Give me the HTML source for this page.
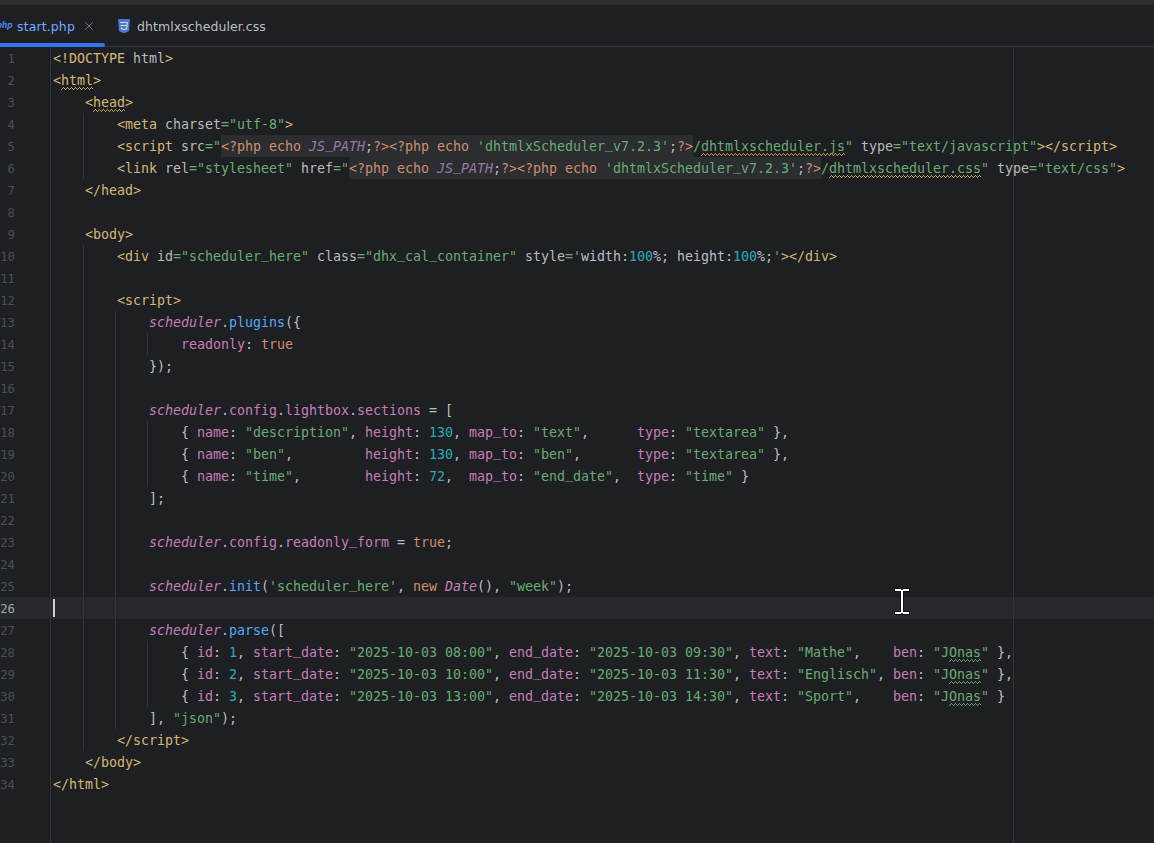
<!DOCTYPE html>
<html lang="en">
<head>
<meta charset="utf-8">
<title>start.php</title>
<style>
html,body{margin:0;padding:0;}
body{width:1154px;height:843px;overflow:hidden;background:#1e1f22;position:relative;font-family:"DejaVu Sans Mono","Liberation Mono",monospace;}
.topstrip{position:absolute;left:0;top:0;width:1154px;height:5px;background:#2b2d30;}
.tabs{position:absolute;left:0;top:5px;width:1154px;height:41px;background:#1e1f22;border-bottom:1px solid #393b40;font-family:"DejaVu Sans","Liberation Sans",sans-serif;font-size:12.5px;}
.tabs .lbl{position:absolute;top:1px;line-height:42px;white-space:pre;}
.underline{position:absolute;left:-4px;top:43px;width:109px;height:4px;border-radius:2px;background:#3574f0;}
.gutterline{position:absolute;left:50px;top:47px;width:1px;height:796px;background:#313438;}
.margin{position:absolute;left:1013px;top:47px;width:1px;height:796px;background:#313438;}
.guide{position:absolute;width:1px;background:#313438;}
.curline{position:absolute;left:0;top:597px;width:1154px;height:22px;background:#26282e;}
.nums{position:absolute;left:0;top:48px;width:14.5px;text-align:right;color:#4b5059;font-size:12.3px;letter-spacing:-0.3px;line-height:22px;white-space:pre;}
.nums .cur{color:#a1a3ab;}
.nums div{height:22px;direction:rtl;}
.code{position:absolute;left:53px;top:48px;color:#bcbec4;font-size:13.3px;letter-spacing:-0.0055px;line-height:22px;white-space:pre;}
.ln{height:22px;}
.phpbg{position:absolute;height:22px;width:472px;background:#2b2d30;}
.t{color:#d5b778}.a{color:#bababa}.s{color:#6aab73}.k{color:#cf8e6d}.c{color:#9876aa;font-style:italic}
.v{color:#c77dbb;font-style:italic}.p{color:#c77dbb}.f{color:#56a8f5}.n{color:#2aacb8}
.u{position:relative;top:-3px;font-style:inherit;}
.sq{position:absolute;overflow:visible;}
.caret{position:absolute;left:53px;top:599px;width:2px;height:18px;background:#ced0d6;}
svg.abs{position:absolute;overflow:visible;}
</style>
</head>
<body>
<div class="topstrip"></div>
<div class="tabs">
  <span class="lbl" style="left:17px;color:#70aeff;letter-spacing:0.12px">start.php</span>
  <span class="lbl" style="left:137px;color:#bcbec4;letter-spacing:0.06px">dhtmlxscheduler.css</span>
</div>
<svg class="abs" style="left:0;top:16px" width="16" height="18" viewBox="0 0 16 18"><text x="-3.3" y="12.3" font-family="Liberation Sans, sans-serif" font-weight="bold" font-style="italic" font-size="8.6" fill="#548af7">php</text></svg>
<svg class="abs" style="left:84px;top:21px" width="10" height="10" viewBox="0 0 10 10"><path d="M1.2 1.2 L8.8 8.8 M8.8 1.2 L1.2 8.8" stroke="#73777e" stroke-width="1" fill="none"/></svg>
<svg class="abs" style="left:117px;top:18px" width="14" height="16" viewBox="0 0 14 16">
  <path d="M1 1 H13 L12 13.2 L7 15.2 L2 13.2 Z" fill="#4877d4"/>
  <path d="M3 4.5 H10.4 L9.6 10.7 L7 11.6 L4.6 10.7 L4.4 9.2 M3.4 7.5 H10" fill="none" stroke="#dadada" stroke-width="1.05" stroke-linejoin="round"/>
</svg>
<div class="underline"></div>
<div class="curline"></div>
<div class="phpbg" style="left:221px;top:135px"></div>
<div class="phpbg" style="left:349px;top:157px"></div>
<div class="gutterline"></div>
<div class="margin"></div>
<div class="guide" style="left:83px;top:113px;height:66px"></div>
<div class="guide" style="left:83px;top:245px;height:506px"></div>
<div class="guide" style="left:115px;top:311px;height:418px"></div>
<div class="guide" style="left:147px;top:333px;height:22px"></div>
<div class="guide" style="left:147px;top:421px;height:66px"></div>
<div class="guide" style="left:147px;top:641px;height:66px"></div>
<div class="nums"><div>1</div><div>2</div><div>3</div><div>4</div><div>5</div><div>6</div><div>7</div><div>8</div><div>9</div><div>10</div><div>11</div><div>12</div><div>13</div><div>14</div><div>15</div><div>16</div><div>17</div><div>18</div><div>19</div><div>20</div><div>21</div><div>22</div><div>23</div><div>24</div><div>25</div><div class="cur">26</div><div>27</div><div>28</div><div>29</div><div>30</div><div>31</div><div>32</div><div>33</div><div>34</div></div>
<div class="code"><div class="ln"><span class="t">&lt;!DOCTYPE</span><span class="a"> html</span><span class="t">&gt;</span></div><div class="ln"><span class="t">&lt;html&gt;</span></div><div class="ln"><span class="t">    &lt;head&gt;</span></div><div class="ln"><span class="t">        &lt;meta</span><span class="a"> charset</span><span class="s">="utf-8"</span><span class="t">&gt;</span></div><div class="ln"><span class="t">        &lt;script</span><span class="a"> src</span><span class="s">="</span><span class="php"><span class="k">&lt;?php echo </span><span class="c">JS<i class="u">_</i>PATH</span>;<span class="k">?&gt;</span><span class="k">&lt;?php echo </span><span class="s">'dhtmlxScheduler<i class="u">_</i>v7.2.3'</span>;<span class="k">?&gt;</span></span><span class="s">/dhtmlxscheduler.js"</span><span class="a"> type</span><span class="s">="text/javascript"</span><span class="t">&gt;&lt;/script&gt;</span></div><div class="ln"><span class="t">        &lt;link</span><span class="a"> rel</span><span class="s">="stylesheet"</span><span class="a"> href</span><span class="s">="</span><span class="php"><span class="k">&lt;?php echo </span><span class="c">JS<i class="u">_</i>PATH</span>;<span class="k">?&gt;</span><span class="k">&lt;?php echo </span><span class="s">'dhtmlxScheduler<i class="u">_</i>v7.2.3'</span>;<span class="k">?&gt;</span></span><span class="s">/dhtmlxscheduler.css"</span><span class="a"> type</span><span class="s">="text/css"</span><span class="t">&gt;</span></div><div class="ln"><span class="t">    &lt;/head&gt;</span></div><div class="ln"></div><div class="ln"><span class="t">    &lt;body&gt;</span></div><div class="ln"><span class="t">        &lt;div</span><span class="a"> id</span><span class="s">="scheduler<i class="u">_</i>here"</span><span class="a"> class</span><span class="s">="dhx<i class="u">_</i>cal<i class="u">_</i>container"</span><span class="a"> style</span><span class="s">='</span>width:<span class="n">100</span>%; height:<span class="n">100</span>%;<span class="s">'</span><span class="t">&gt;&lt;/div&gt;</span></div><div class="ln"></div><div class="ln"><span class="t">        &lt;script&gt;</span></div><div class="ln"><span class="v">            scheduler</span>.<span class="f">plugins</span>({</div><div class="ln"><span class="p">                readonly</span>: <span class="k">true</span></div><div class="ln">            });</div><div class="ln"></div><div class="ln"><span class="v">            scheduler</span>.<span class="p">config</span>.<span class="p">lightbox</span>.<span class="p">sections</span> = [</div><div class="ln">                { <span class="p">name</span>: <span class="s">"description"</span>, <span class="p">height</span>: <span class="n">130</span>, <span class="p">map<i class="u">_</i>to</span>: <span class="s">"text"</span>,      <span class="p">type</span>: <span class="s">"textarea"</span> },</div><div class="ln">                { <span class="p">name</span>: <span class="s">"ben"</span>,         <span class="p">height</span>: <span class="n">130</span>, <span class="p">map<i class="u">_</i>to</span>: <span class="s">"ben"</span>,       <span class="p">type</span>: <span class="s">"textarea"</span> },</div><div class="ln">                { <span class="p">name</span>: <span class="s">"time"</span>,        <span class="p">height</span>: <span class="n">72</span>,  <span class="p">map<i class="u">_</i>to</span>: <span class="s">"end<i class="u">_</i>date"</span>,  <span class="p">type</span>: <span class="s">"time"</span> }</div><div class="ln">            ];</div><div class="ln"></div><div class="ln"><span class="v">            scheduler</span>.<span class="p">config</span>.<span class="p">readonly<i class="u">_</i>form</span> = <span class="k">true</span>;</div><div class="ln"></div><div class="ln"><span class="v">            scheduler</span>.<span class="f">init</span>(<span class="s">'scheduler<i class="u">_</i>here'</span>, <span class="k">new </span><span class="v">Date</span>(), <span class="s">"week"</span>);</div><div class="ln cur"></div><div class="ln"><span class="v">            scheduler</span>.<span class="f">parse</span>([</div><div class="ln">                { <span class="p">id</span>: <span class="n">1</span>, <span class="p">start<i class="u">_</i>date</span>: <span class="s">"2025-10-03 08:00"</span>, <span class="p">end<i class="u">_</i>date</span>: <span class="s">"2025-10-03 09:30"</span>, <span class="p">text</span>: <span class="s">"Mathe"</span>,    <span class="p">ben</span>: <span class="s">"JOnas"</span> },</div><div class="ln">                { <span class="p">id</span>: <span class="n">2</span>, <span class="p">start<i class="u">_</i>date</span>: <span class="s">"2025-10-03 10:00"</span>, <span class="p">end<i class="u">_</i>date</span>: <span class="s">"2025-10-03 11:30"</span>, <span class="p">text</span>: <span class="s">"Englisch"</span>, <span class="p">ben</span>: <span class="s">"JOnas"</span> },</div><div class="ln">                { <span class="p">id</span>: <span class="n">3</span>, <span class="p">start<i class="u">_</i>date</span>: <span class="s">"2025-10-03 13:00"</span>, <span class="p">end<i class="u">_</i>date</span>: <span class="s">"2025-10-03 14:30"</span>, <span class="p">text</span>: <span class="s">"Sport"</span>,    <span class="p">ben</span>: <span class="s">"JOnas"</span> }</div><div class="ln">            ], <span class="s">"json"</span>);</div><div class="ln"><span class="t">        &lt;/script&gt;</span></div><div class="ln"><span class="t">    &lt;/body&gt;</span></div><div class="ln"><span class="t">&lt;/html&gt;</span></div></div>
<svg class="sq" style="left:61px;top:87px" width="32" height="3" viewBox="0 0 32 3" shape-rendering="crispEdges"><path d="M0 2h1v1h-1zM1 1h1v1h-1zM2 0h1v1h-1zM3 1h1v1h-1zM4 2h1v1h-1zM5 1h1v1h-1zM6 0h1v1h-1zM7 1h1v1h-1zM8 2h1v1h-1zM9 1h1v1h-1zM10 0h1v1h-1zM11 1h1v1h-1zM12 2h1v1h-1zM13 1h1v1h-1zM14 0h1v1h-1zM15 1h1v1h-1zM16 2h1v1h-1zM17 1h1v1h-1zM18 0h1v1h-1zM19 1h1v1h-1zM20 2h1v1h-1zM21 1h1v1h-1zM22 0h1v1h-1zM23 1h1v1h-1zM24 2h1v1h-1zM25 1h1v1h-1zM26 0h1v1h-1zM27 1h1v1h-1zM28 2h1v1h-1zM29 1h1v1h-1zM30 0h1v1h-1zM31 1h1v1h-1z" fill="#c4a04a"/></svg>
<svg class="sq" style="left:93px;top:109px" width="32" height="3" viewBox="0 0 32 3" shape-rendering="crispEdges"><path d="M0 2h1v1h-1zM1 1h1v1h-1zM2 0h1v1h-1zM3 1h1v1h-1zM4 2h1v1h-1zM5 1h1v1h-1zM6 0h1v1h-1zM7 1h1v1h-1zM8 2h1v1h-1zM9 1h1v1h-1zM10 0h1v1h-1zM11 1h1v1h-1zM12 2h1v1h-1zM13 1h1v1h-1zM14 0h1v1h-1zM15 1h1v1h-1zM16 2h1v1h-1zM17 1h1v1h-1zM18 0h1v1h-1zM19 1h1v1h-1zM20 2h1v1h-1zM21 1h1v1h-1zM22 0h1v1h-1zM23 1h1v1h-1zM24 2h1v1h-1zM25 1h1v1h-1zM26 0h1v1h-1zM27 1h1v1h-1zM28 2h1v1h-1zM29 1h1v1h-1zM30 0h1v1h-1zM31 1h1v1h-1z" fill="#c4a04a"/></svg>
<svg class="sq" style="left:701px;top:153px" width="144" height="3" viewBox="0 0 144 3" shape-rendering="crispEdges"><path d="M0 2h1v1h-1zM1 1h1v1h-1zM2 0h1v1h-1zM3 1h1v1h-1zM4 2h1v1h-1zM5 1h1v1h-1zM6 0h1v1h-1zM7 1h1v1h-1zM8 2h1v1h-1zM9 1h1v1h-1zM10 0h1v1h-1zM11 1h1v1h-1zM12 2h1v1h-1zM13 1h1v1h-1zM14 0h1v1h-1zM15 1h1v1h-1zM16 2h1v1h-1zM17 1h1v1h-1zM18 0h1v1h-1zM19 1h1v1h-1zM20 2h1v1h-1zM21 1h1v1h-1zM22 0h1v1h-1zM23 1h1v1h-1zM24 2h1v1h-1zM25 1h1v1h-1zM26 0h1v1h-1zM27 1h1v1h-1zM28 2h1v1h-1zM29 1h1v1h-1zM30 0h1v1h-1zM31 1h1v1h-1zM32 2h1v1h-1zM33 1h1v1h-1zM34 0h1v1h-1zM35 1h1v1h-1zM36 2h1v1h-1zM37 1h1v1h-1zM38 0h1v1h-1zM39 1h1v1h-1zM40 2h1v1h-1zM41 1h1v1h-1zM42 0h1v1h-1zM43 1h1v1h-1zM44 2h1v1h-1zM45 1h1v1h-1zM46 0h1v1h-1zM47 1h1v1h-1zM48 2h1v1h-1zM49 1h1v1h-1zM50 0h1v1h-1zM51 1h1v1h-1zM52 2h1v1h-1zM53 1h1v1h-1zM54 0h1v1h-1zM55 1h1v1h-1zM56 2h1v1h-1zM57 1h1v1h-1zM58 0h1v1h-1zM59 1h1v1h-1zM60 2h1v1h-1zM61 1h1v1h-1zM62 0h1v1h-1zM63 1h1v1h-1zM64 2h1v1h-1zM65 1h1v1h-1zM66 0h1v1h-1zM67 1h1v1h-1zM68 2h1v1h-1zM69 1h1v1h-1zM70 0h1v1h-1zM71 1h1v1h-1zM72 2h1v1h-1zM73 1h1v1h-1zM74 0h1v1h-1zM75 1h1v1h-1zM76 2h1v1h-1zM77 1h1v1h-1zM78 0h1v1h-1zM79 1h1v1h-1zM80 2h1v1h-1zM81 1h1v1h-1zM82 0h1v1h-1zM83 1h1v1h-1zM84 2h1v1h-1zM85 1h1v1h-1zM86 0h1v1h-1zM87 1h1v1h-1zM88 2h1v1h-1zM89 1h1v1h-1zM90 0h1v1h-1zM91 1h1v1h-1zM92 2h1v1h-1zM93 1h1v1h-1zM94 0h1v1h-1zM95 1h1v1h-1zM96 2h1v1h-1zM97 1h1v1h-1zM98 0h1v1h-1zM99 1h1v1h-1zM100 2h1v1h-1zM101 1h1v1h-1zM102 0h1v1h-1zM103 1h1v1h-1zM104 2h1v1h-1zM105 1h1v1h-1zM106 0h1v1h-1zM107 1h1v1h-1zM108 2h1v1h-1zM109 1h1v1h-1zM110 0h1v1h-1zM111 1h1v1h-1zM112 2h1v1h-1zM113 1h1v1h-1zM114 0h1v1h-1zM115 1h1v1h-1zM116 2h1v1h-1zM117 1h1v1h-1zM118 0h1v1h-1zM119 1h1v1h-1zM120 2h1v1h-1zM121 1h1v1h-1zM122 0h1v1h-1zM123 1h1v1h-1zM124 2h1v1h-1zM125 1h1v1h-1zM126 0h1v1h-1zM127 1h1v1h-1zM128 2h1v1h-1zM129 1h1v1h-1zM130 0h1v1h-1zM131 1h1v1h-1zM132 2h1v1h-1zM133 1h1v1h-1zM134 0h1v1h-1zM135 1h1v1h-1zM136 2h1v1h-1zM137 1h1v1h-1zM138 0h1v1h-1zM139 1h1v1h-1zM140 2h1v1h-1zM141 1h1v1h-1zM142 0h1v1h-1zM143 1h1v1h-1z" fill="#c4a04a"/></svg>
<svg class="sq" style="left:829px;top:175px" width="152" height="3" viewBox="0 0 152 3" shape-rendering="crispEdges"><path d="M0 2h1v1h-1zM1 1h1v1h-1zM2 0h1v1h-1zM3 1h1v1h-1zM4 2h1v1h-1zM5 1h1v1h-1zM6 0h1v1h-1zM7 1h1v1h-1zM8 2h1v1h-1zM9 1h1v1h-1zM10 0h1v1h-1zM11 1h1v1h-1zM12 2h1v1h-1zM13 1h1v1h-1zM14 0h1v1h-1zM15 1h1v1h-1zM16 2h1v1h-1zM17 1h1v1h-1zM18 0h1v1h-1zM19 1h1v1h-1zM20 2h1v1h-1zM21 1h1v1h-1zM22 0h1v1h-1zM23 1h1v1h-1zM24 2h1v1h-1zM25 1h1v1h-1zM26 0h1v1h-1zM27 1h1v1h-1zM28 2h1v1h-1zM29 1h1v1h-1zM30 0h1v1h-1zM31 1h1v1h-1zM32 2h1v1h-1zM33 1h1v1h-1zM34 0h1v1h-1zM35 1h1v1h-1zM36 2h1v1h-1zM37 1h1v1h-1zM38 0h1v1h-1zM39 1h1v1h-1zM40 2h1v1h-1zM41 1h1v1h-1zM42 0h1v1h-1zM43 1h1v1h-1zM44 2h1v1h-1zM45 1h1v1h-1zM46 0h1v1h-1zM47 1h1v1h-1zM48 2h1v1h-1zM49 1h1v1h-1zM50 0h1v1h-1zM51 1h1v1h-1zM52 2h1v1h-1zM53 1h1v1h-1zM54 0h1v1h-1zM55 1h1v1h-1zM56 2h1v1h-1zM57 1h1v1h-1zM58 0h1v1h-1zM59 1h1v1h-1zM60 2h1v1h-1zM61 1h1v1h-1zM62 0h1v1h-1zM63 1h1v1h-1zM64 2h1v1h-1zM65 1h1v1h-1zM66 0h1v1h-1zM67 1h1v1h-1zM68 2h1v1h-1zM69 1h1v1h-1zM70 0h1v1h-1zM71 1h1v1h-1zM72 2h1v1h-1zM73 1h1v1h-1zM74 0h1v1h-1zM75 1h1v1h-1zM76 2h1v1h-1zM77 1h1v1h-1zM78 0h1v1h-1zM79 1h1v1h-1zM80 2h1v1h-1zM81 1h1v1h-1zM82 0h1v1h-1zM83 1h1v1h-1zM84 2h1v1h-1zM85 1h1v1h-1zM86 0h1v1h-1zM87 1h1v1h-1zM88 2h1v1h-1zM89 1h1v1h-1zM90 0h1v1h-1zM91 1h1v1h-1zM92 2h1v1h-1zM93 1h1v1h-1zM94 0h1v1h-1zM95 1h1v1h-1zM96 2h1v1h-1zM97 1h1v1h-1zM98 0h1v1h-1zM99 1h1v1h-1zM100 2h1v1h-1zM101 1h1v1h-1zM102 0h1v1h-1zM103 1h1v1h-1zM104 2h1v1h-1zM105 1h1v1h-1zM106 0h1v1h-1zM107 1h1v1h-1zM108 2h1v1h-1zM109 1h1v1h-1zM110 0h1v1h-1zM111 1h1v1h-1zM112 2h1v1h-1zM113 1h1v1h-1zM114 0h1v1h-1zM115 1h1v1h-1zM116 2h1v1h-1zM117 1h1v1h-1zM118 0h1v1h-1zM119 1h1v1h-1zM120 2h1v1h-1zM121 1h1v1h-1zM122 0h1v1h-1zM123 1h1v1h-1zM124 2h1v1h-1zM125 1h1v1h-1zM126 0h1v1h-1zM127 1h1v1h-1zM128 2h1v1h-1zM129 1h1v1h-1zM130 0h1v1h-1zM131 1h1v1h-1zM132 2h1v1h-1zM133 1h1v1h-1zM134 0h1v1h-1zM135 1h1v1h-1zM136 2h1v1h-1zM137 1h1v1h-1zM138 0h1v1h-1zM139 1h1v1h-1zM140 2h1v1h-1zM141 1h1v1h-1zM142 0h1v1h-1zM143 1h1v1h-1zM144 2h1v1h-1zM145 1h1v1h-1zM146 0h1v1h-1zM147 1h1v1h-1zM148 2h1v1h-1zM149 1h1v1h-1zM150 0h1v1h-1zM151 1h1v1h-1z" fill="#c4a04a"/></svg>
<svg class="sq" style="left:949px;top:659px" width="32" height="3" viewBox="0 0 32 3" shape-rendering="crispEdges"><path d="M0 2h1v1h-1zM1 1h1v1h-1zM2 0h1v1h-1zM3 1h1v1h-1zM4 2h1v1h-1zM5 1h1v1h-1zM6 0h1v1h-1zM7 1h1v1h-1zM8 2h1v1h-1zM9 1h1v1h-1zM10 0h1v1h-1zM11 1h1v1h-1zM12 2h1v1h-1zM13 1h1v1h-1zM14 0h1v1h-1zM15 1h1v1h-1zM16 2h1v1h-1zM17 1h1v1h-1zM18 0h1v1h-1zM19 1h1v1h-1zM20 2h1v1h-1zM21 1h1v1h-1zM22 0h1v1h-1zM23 1h1v1h-1zM24 2h1v1h-1zM25 1h1v1h-1zM26 0h1v1h-1zM27 1h1v1h-1zM28 2h1v1h-1zM29 1h1v1h-1zM30 0h1v1h-1zM31 1h1v1h-1z" fill="#5fa068"/></svg>
<svg class="sq" style="left:949px;top:681px" width="32" height="3" viewBox="0 0 32 3" shape-rendering="crispEdges"><path d="M0 2h1v1h-1zM1 1h1v1h-1zM2 0h1v1h-1zM3 1h1v1h-1zM4 2h1v1h-1zM5 1h1v1h-1zM6 0h1v1h-1zM7 1h1v1h-1zM8 2h1v1h-1zM9 1h1v1h-1zM10 0h1v1h-1zM11 1h1v1h-1zM12 2h1v1h-1zM13 1h1v1h-1zM14 0h1v1h-1zM15 1h1v1h-1zM16 2h1v1h-1zM17 1h1v1h-1zM18 0h1v1h-1zM19 1h1v1h-1zM20 2h1v1h-1zM21 1h1v1h-1zM22 0h1v1h-1zM23 1h1v1h-1zM24 2h1v1h-1zM25 1h1v1h-1zM26 0h1v1h-1zM27 1h1v1h-1zM28 2h1v1h-1zM29 1h1v1h-1zM30 0h1v1h-1zM31 1h1v1h-1z" fill="#5fa068"/></svg>
<svg class="sq" style="left:949px;top:703px" width="32" height="3" viewBox="0 0 32 3" shape-rendering="crispEdges"><path d="M0 2h1v1h-1zM1 1h1v1h-1zM2 0h1v1h-1zM3 1h1v1h-1zM4 2h1v1h-1zM5 1h1v1h-1zM6 0h1v1h-1zM7 1h1v1h-1zM8 2h1v1h-1zM9 1h1v1h-1zM10 0h1v1h-1zM11 1h1v1h-1zM12 2h1v1h-1zM13 1h1v1h-1zM14 0h1v1h-1zM15 1h1v1h-1zM16 2h1v1h-1zM17 1h1v1h-1zM18 0h1v1h-1zM19 1h1v1h-1zM20 2h1v1h-1zM21 1h1v1h-1zM22 0h1v1h-1zM23 1h1v1h-1zM24 2h1v1h-1zM25 1h1v1h-1zM26 0h1v1h-1zM27 1h1v1h-1zM28 2h1v1h-1zM29 1h1v1h-1zM30 0h1v1h-1zM31 1h1v1h-1z" fill="#5fa068"/></svg>
<div class="caret"></div>
<svg class="abs" style="left:894px;top:588px" width="16" height="27" viewBox="0 0 16 27" shape-rendering="crispEdges">
  <path d="M0.2 0.2H15.8V3.8H9.8V23.2H15.8V26.8H0.2V23.2H6.2V3.8H0.2Z" fill="#0b0b0c" shape-rendering="auto"/>
  <path d="M1 1H15V3H9V24H15V26H1V24H7V3H1Z" fill="#ffffff"/>
  <path d="M7.2 0.8H8.8V2.1H7.2Z M7.2 24.9H8.8V26.2H7.2Z" fill="#0b0b0c" shape-rendering="auto"/>
</svg>
</body>
</html>
